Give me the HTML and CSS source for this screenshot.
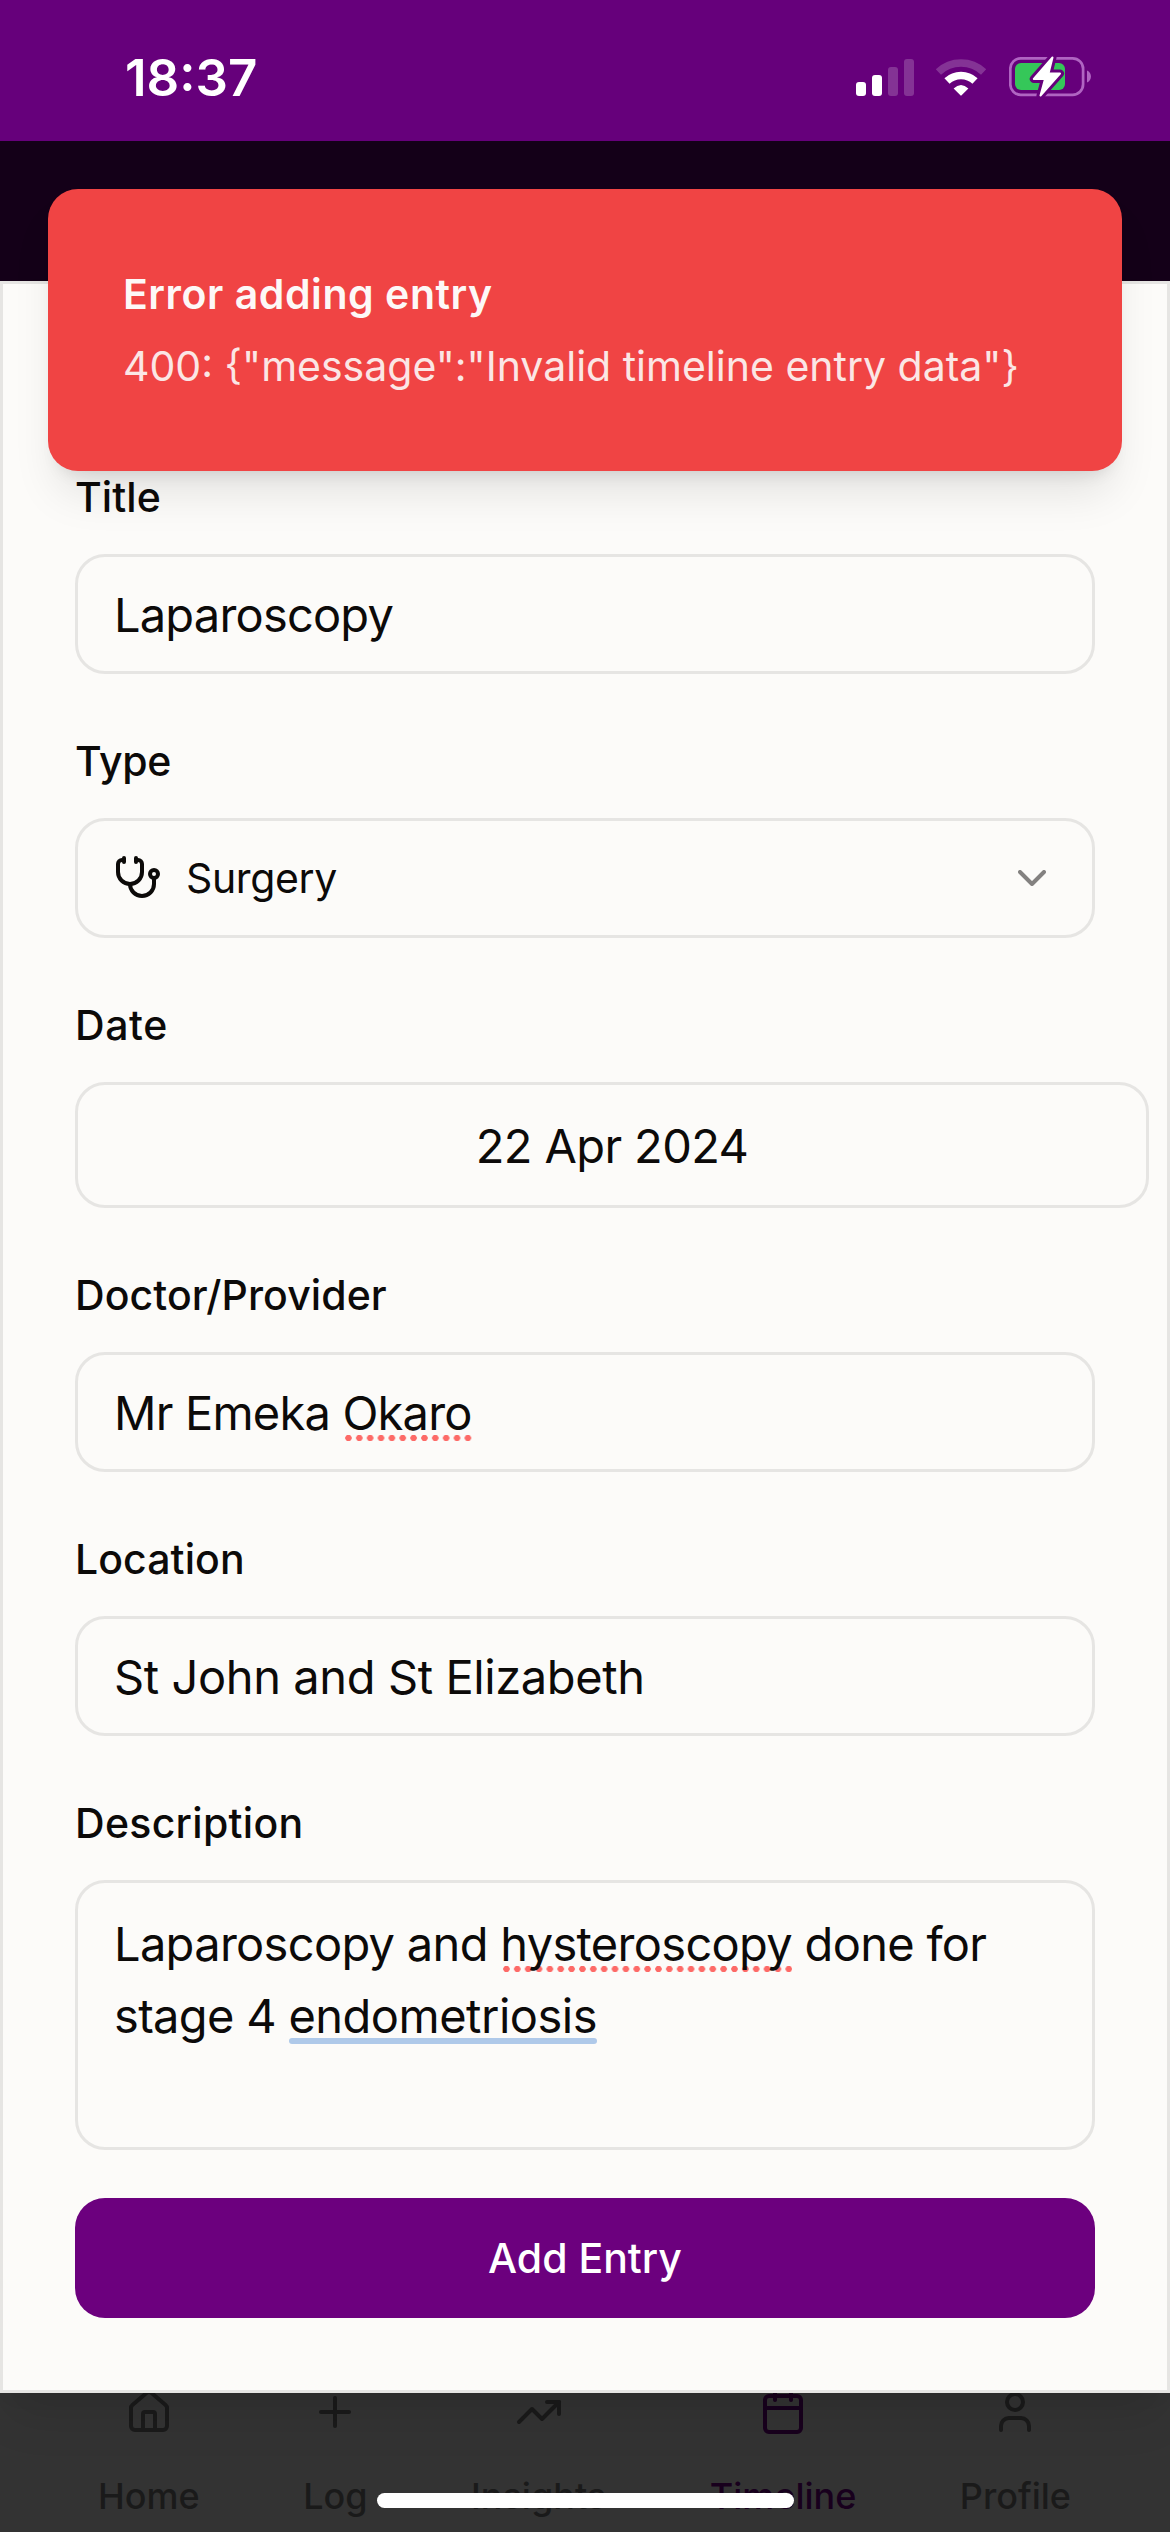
FILE: index.html
```html
<!DOCTYPE html>
<html lang="en">
<head>
<meta charset="utf-8">
<title>Add Timeline Entry</title>
<link rel="stylesheet" href="styles.css">
</head>
<body>
<div class="screen">
  <header class="status-bar">
    <span class="time">18:37</span>
    <div class="status-icons">
      <svg class="signal" width="58" height="39" viewBox="0 0 58 39" fill="#fff">
        <rect x="0" y="24" width="10" height="14" rx="3"/>
        <rect x="16" y="17" width="10" height="21" rx="3"/>
        <rect x="32" y="9" width="10" height="29" rx="3" opacity=".2"/>
        <rect x="48" y="1" width="10" height="37" rx="3" opacity=".2"/>
      </svg>
      <svg class="wifi" width="52" height="39" viewBox="0 0 52 39">
        <path d="M3.4 14 A33 33 0 0 1 48.6 14" fill="none" stroke="#fff" stroke-width="7.6" opacity=".2"/>
        <path d="M12 23 A20.5 20.5 0 0 1 40 23" fill="none" stroke="#fff" stroke-width="7.6"/>
        <path d="M18.6 30.4 Q26 23.400 33.400 30.400 L26.600 37.300 Q26 38 25.400 37.300 Z" fill="#fff"/>
      </svg>
      <svg class="battery" width="84" height="42" viewBox="0 0 84 42">
        <rect x="1.300" y="2.300" width="72.800" height="36.500" rx="10.500" fill="none" stroke="#b064c2" stroke-width="2.700"/>
        <rect x="6" y="7" width="50" height="27" rx="6" fill="#35c759"/>
        <path d="M78 14.500 C83.300 16.500 83.300 24.500 78 26.500 Z" fill="#b064c2"/>
        <path d="M43.500 1.500 L24.800 23 H36 L31.500 39.500 L51 17.500 H39.500 Z" fill="#fff" stroke="#66007b" stroke-width="8" stroke-linejoin="round"/>
        <path d="M43.500 1.500 L24.800 23 H36 L31.500 39.500 L51 17.500 H39.500 Z" fill="#fff" stroke="#fff" stroke-width="2" stroke-linejoin="round"/>
      </svg>
    </div>
  </header>
  <div class="page-header"></div>

  <main class="dialog">
    <form class="form">
      <div class="field">
        <label class="label">Title</label>
        <div class="control">Laparoscopy</div>
      </div>
      <div class="field">
        <label class="label label-type">Type</label>
        <div class="control select">
          <svg class="icon" viewBox="0 0 24 24"><path d="M11 2v2M5 2v2M5 3H4a2 2 0 0 0-2 2v4a6 6 0 0 0 12 0V5a2 2 0 0 0-2-2h-1"/><path d="M8 15a6 6 0 0 0 12 0v-3"/><circle cx="20" cy="10" r="2"/></svg>
          <span class="select-value">Surgery</span>
          <svg class="icon chevron" viewBox="0 0 24 24"><path d="m6 9 6 6 6-6"/></svg>
        </div>
      </div>
      <div class="field">
        <label class="label label-date">Date</label>
        <div class="control date">22 Apr 2024</div>
      </div>
      <div class="field">
        <label class="label">Doctor/Provider</label>
        <div class="control">Mr Emeka&nbsp;<span class="misspelt">Okaro</span></div>
      </div>
      <div class="field">
        <label class="label">Location</label>
        <div class="control location">St John and St Elizabeth</div>
      </div>
      <div class="field">
        <label class="label label-description">Description</label>
        <div class="control textarea">Laparoscopy and <span class="misspelt">hysteroscopy</span> done for<br>stage 4 <span class="suggestion">endometriosis</span></div>
      </div>
      <button class="submit" type="button">Add Entry</button>
    </form>
  </main>

  <nav class="tab-bar">
    <a class="tab"><svg class="icon" viewBox="0 0 24 24"><path d="M15 21v-8a1 1 0 0 0-1-1h-4a1 1 0 0 0-1 1v8"/><path d="M3 10a2 2 0 0 1 .709-1.528l7-5.999a2 2 0 0 1 2.582 0l7 5.999A2 2 0 0 1 21 10v9a2 2 0 0 1-2 2H5a2 2 0 0 1-2-2z"/></svg><span>Home</span></a>
    <a class="tab"><svg class="icon" viewBox="0 0 24 24"><path d="M5 12h14M12 5v14"/></svg><span>Log</span></a>
    <a class="tab"><svg class="icon" viewBox="0 0 24 24"><path d="m22 7-8.500 8.500-5-5L2 17"/><path d="M16 7h6v6"/></svg><span>Insights</span></a>
    <a class="tab active"><svg class="icon" viewBox="0 0 24 24"><path d="M8 2v4M16 2v4M3 10h18"/><rect x="3" y="4" width="18" height="18" rx="2"/></svg><span>Timeline</span></a>
    <a class="tab"><svg class="icon" viewBox="0 0 24 24"><path d="M19 21v-2a4 4 0 0 0-4-4H9a4 4 0 0 0-4 4v2"/><circle cx="12" cy="7" r="4"/></svg><span>Profile</span></a>
  </nav>

  <div class="toast">
    <div class="toast-title">Error adding entry</div>
    <div class="toast-message">400: {"message":"Invalid timeline entry data"}</div>
  </div>
  <div class="home-indicator"></div>
</div>
</body>
</html>
```
FILE: styles.css
```css
* { box-sizing: border-box; }

body {
  margin: 0;
  font-family: Inter, "Liberation Sans", sans-serif;
  color: #0c0a09;
}

.screen {
  position: relative;
  display: flex;
  flex-direction: column;
  width: 1170px;
  height: 2532px;
  overflow: hidden;
  background: #333;
}

.status-bar {
  flex: none;
  display: flex;
  justify-content: space-between;
  height: 141px;
  padding: 0 77px 0 125px;
  background: #66007b;
  color: #fff;
}

.time {
  font-size: 51px;
  font-weight: 600;
  line-height: 62px;
  padding-top: 47px;
}

.status-icons {
  display: flex;
  align-items: flex-start;
  padding-top: 58px;
}

.wifi { margin-left: 21px; }
.battery { margin-left: 22px; margin-top: -2px; }

.page-header {
  flex: none;
  height: 140px;
  background: #140018;
}

.dialog {
  position: relative;
  z-index: 1;
  flex: none;
  height: 2112px;
  padding: 192px 72px 72px;
  border: 3px solid #e6e5e3;
  background: #fcfbf9;
  box-shadow: 0 30px 45px -9px rgba(0, 0, 0, .1), 0 12px 18px -12px rgba(0, 0, 0, .1);
}

.form {
  display: flex;
  flex-direction: column;
}

.field {
  display: flex;
  flex-direction: column;
  gap: 36px;
  margin-bottom: 66px;
}

.field:nth-last-child(2) { margin-bottom: 48px; }

.label {
  font-size: 41px;
  font-weight: 500;
  line-height: 42px;
  letter-spacing: .08px;
}

.label-type { letter-spacing: -.3px; }
.label-date { letter-spacing: .6px; }
.label-description { letter-spacing: .3px; }

.control {
  display: flex;
  align-items: center;
  height: 120px;
  padding: 1px 36px 0;
  border: 3px solid #e6e5e3;
  border-radius: 30px;
  font-size: 47px;
  line-height: 72px;
  letter-spacing: -.8px;
  white-space: nowrap;
}

.select {
  padding-top: 0;
  font-size: 41px;
  letter-spacing: -.35px;
}

.select-value { margin-left: 24px; }

.icon {
  display: block;
  width: 48px;
  height: 48px;
  fill: none;
  stroke: currentColor;
  stroke-width: 2;
  stroke-linecap: round;
  stroke-linejoin: round;
}

.chevron {
  margin-left: auto;
  opacity: .5;
}

.date {
  justify-content: center;
  width: 1074px;
  height: 126px;
  letter-spacing: -.6px;
}

.location { letter-spacing: -.4px; }

.textarea {
  display: block;
  height: 270px;
  padding: 25px 36px;
  letter-spacing: -.68px;
}

.misspelt,
.suggestion {
  position: relative;
  z-index: 0;
}

.misspelt::after,
.suggestion::after {
  content: "";
  position: absolute;
  z-index: -1;
  left: 1px;
  right: 0;
  bottom: 0;
  height: 6px;
}

.misspelt::after {
  background: radial-gradient(circle, #fd6a67 2.900px, transparent 3.500px) 0 0 / 10.870px 6px repeat-x;
}

.control:not(.textarea) .misspelt::after { bottom: 8px; }

.suggestion { letter-spacing: -.5px; }

.suggestion::after {
  border-radius: 3px;
  background: #afc9e9;
}

.submit {
  height: 120px;
  padding: 0;
  border: 0;
  border-radius: 30px;
  background: #6c007e;
  color: #fff;
  font: 500 41px/60px Inter, "Liberation Sans", sans-serif;
}

.tab-bar {
  flex: 1;
  display: flex;
  justify-content: space-between;
  padding: 0 99px 0 98px;
  background: #333;
  color: #1a1a1a;
}

.tab {
  display: flex;
  flex-direction: column;
  align-items: center;
  gap: 36px;
  margin-top: -5px;
  font-size: 36px;
  font-weight: 500;
  line-height: 48px;
}

.tab.active { color: #18001d; }

.toast {
  position: absolute;
  z-index: 2;
  top: 189px;
  left: 48px;
  right: 48px;
  height: 282px;
  padding: 75px 75px;
  border-radius: 30px;
  background: #f04444;
  color: #fdf8f7;
  box-shadow: 0 30px 45px -9px rgba(0, 0, 0, .1), 0 12px 18px -12px rgba(0, 0, 0, .14);
}

.toast-title {
  margin-bottom: 12px;
  font-size: 41px;
  font-weight: 600;
  line-height: 60px;
  letter-spacing: .55px;
}

.toast-message {
  font-size: 41px;
  line-height: 60px;
  opacity: .9;
  white-space: nowrap;
}

.home-indicator {
  position: absolute;
  z-index: 3;
  left: 377px;
  top: 2493px;
  width: 417px;
  height: 15px;
  border-radius: 8px;
  background: #fff;
}
```
